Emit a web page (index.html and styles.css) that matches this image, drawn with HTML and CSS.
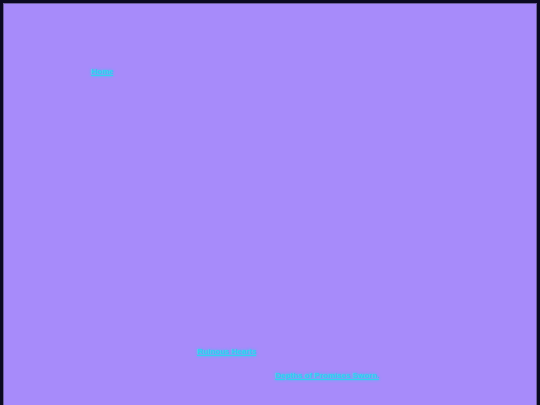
FILE: index.html
```html
<!DOCTYPE html>
<html>
<head>
<meta charset="utf-8">
<link rel="stylesheet" href="styles.css">
</head>
<body>
<div class="page">
  <nav class="nav"><a class="link" href="#">Home</a></nav>
  <ul class="list">
    <li class="item item-1"><a class="link" href="#">Ruinous Hearts</a></li>
    <li class="item item-2"><a class="link" href="#">Depths of Promises Sworn.</a></li>
  </ul>
</div>
</body>
</html>
```
FILE: styles.css
```css
html, body {
  margin: 0;
  padding: 0;
  height: 100%;
  overflow: hidden;
}
body {
  background: #0b0a1f;
  padding: 3px 3px 0 3px;
  box-sizing: border-box;
  font-family: "Liberation Sans", Arial, sans-serif;
}
.page {
  background: #a78bfa;
  border: 1px solid #6f62a0;
  height: 420px;
  box-sizing: border-box;
  font-size: 8px;
  line-height: 10px;
}
.nav {
  padding: 63px 0 0 87px;
  height: 10px;
}
.link {
  color: #2fd3f0;
  font-size: 8px;
  font-weight: bold;
  line-height: 10px;
  text-decoration: underline;
  text-shadow: 0 0 3px #22d3ee;
}
.list {
  list-style: none;
  margin: 0;
  padding: 270px 0 0 0;
}
.item {
  height: 24px;
}
.item-1 { padding-left: 193px; }
.item-2 { padding-left: 271px; }
```
